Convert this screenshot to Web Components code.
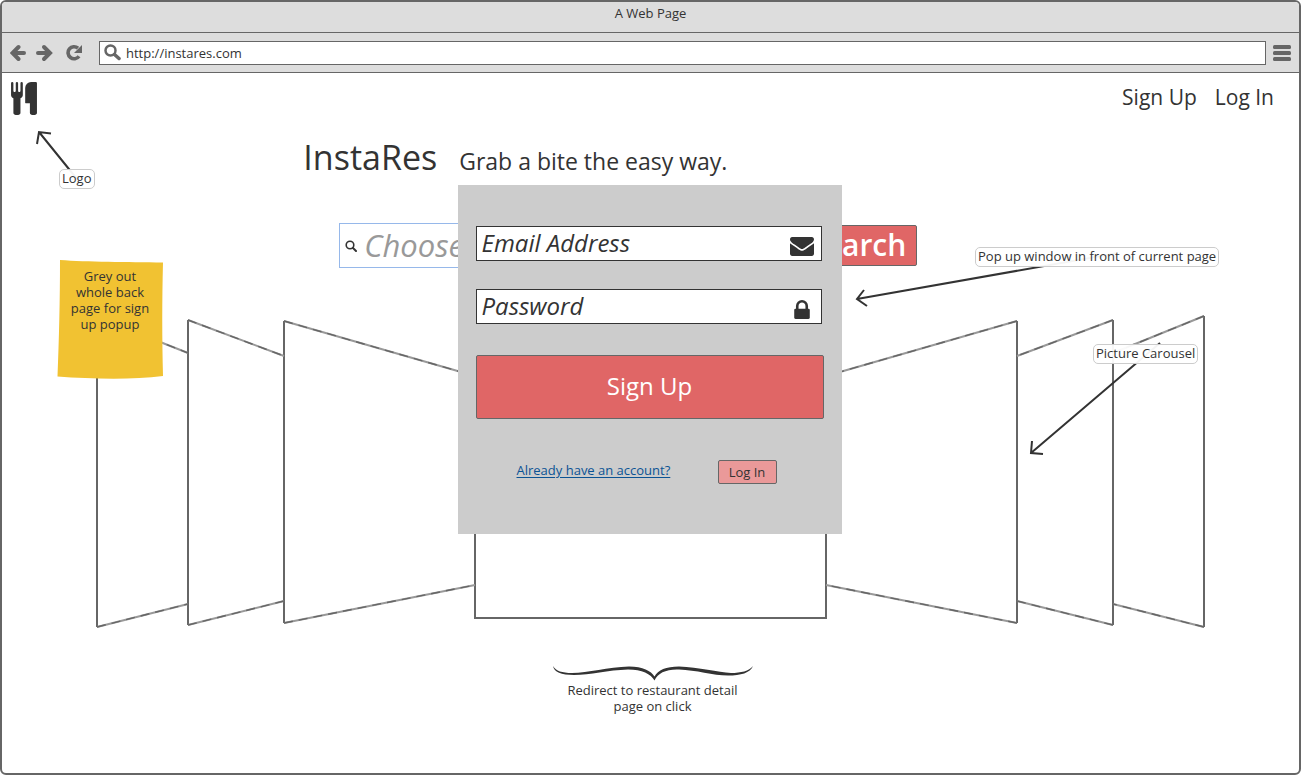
<!DOCTYPE html>
<html lang="en">
<head>
<meta charset="utf-8">
<title>InstaRes wireframe</title>
<style>
  body { margin: 0; font: 13px/16px "Open Sans", "Noto Sans", sans-serif; color: #333; background: #fff; }
</style>
</head>
<body>
<wire-browser heading="A Web Page" address="http://instares.com">
  <site-nav></site-nav>
  <page-stage>
    <site-hero></site-hero>
    <picture-carousel></picture-carousel>
    <brace-note>Redirect to restaurant detail page on click</brace-note>
    <signup-popup slot="popup"></signup-popup>
    <note-arrows slot="notes"></note-arrows>
    <sticky-note slot="notes">Grey out whole back page for sign up popup</sticky-note>
    <callout-note slot="notes" style="--x:7px;--y:48px">Logo</callout-note>
    <callout-note slot="notes" style="--x:923px;--y:126px">Pop up window in front of current page</callout-note>
    <callout-note slot="notes" style="--x:1041px;--y:223px">Picture Carousel</callout-note>
  </page-stage>
</wire-browser>

<script>
const define = (name, html, setup) => customElements.define(name, class extends HTMLElement {
  constructor() {
    super();
    const t = document.createElement('template');
    t.innerHTML = html;
    this.attachShadow({ mode: 'open' }).append(t.content.cloneNode(true));
  }
  connectedCallback() { if (setup) setup(this, this.shadowRoot); }
});

/* One-line text box with an icon at its right end */
define('icon-field', `
<style>
  :host { display: block; }
  label { display: flex; align-items: center; height: 35px; box-sizing: border-box; padding: 0 7px 0 5px; border: 1px solid #333; background: #fff; }
  input { flex: 1; min-width: 0; padding: 0 0 2px; border: 0; outline: 0; background: none; font: italic 24px/30px "Open Sans", sans-serif; color: #333; }
  input::placeholder { color: #333; opacity: 1; }
  slot { display: flex; justify-content: center; width: 24px; padding-top: 6px; }
</style>
<label><input><slot></slot></label>`, (host, root) => {
  const input = root.querySelector('input');
  input.type = host.getAttribute('type');
  input.placeholder = host.getAttribute('label');
  input.setAttribute('aria-label', host.getAttribute('label'));
});

define('wire-button', `
<style>
  :host { display: block; font-size: 13px; }
  button { display: block; width: 100%; height: 100%; margin: 0; padding: 0 9px 2px; border: 1px solid #666; border-radius: 2px; background: var(--fill, #e06666); color: inherit; font: inherit; line-height: 22px; }
</style>
<button type="button"><slot></slot></button>`);

define('wire-browser', `
<style>
  :host { display: flex; flex-direction: column; min-height: 100vh; box-sizing: border-box; border: 2px solid #666; border-radius: 6px; background: #fff; overflow: hidden; }
  .title { height: 30px; border-bottom: 1px solid #666; background: #ddd; text-align: center; line-height: 23px; }
  .bar { display: flex; align-items: center; height: 39px; padding: 0 8px; border-bottom: 1px solid #666; background: #ddd; }
  button { display: block; margin: 0; padding: 0; border: 0; background: none; line-height: 0; }
  .back { margin-right: 8px; }
  .next { margin-right: 12px; }
  .load { margin-right: 15px; }
  label { display: flex; flex: 1; align-items: center; height: 24px; box-sizing: border-box; margin-right: 7px; padding: 0 4px; border: 1px solid #666; background: #fff; }
  input { flex: 1; min-width: 0; margin-left: 5px; padding: 0; border: 0; outline: 0; background: none; font: inherit; color: inherit; }
</style>
<div class="title"></div>
<div class="bar">
  <button class="back" aria-label="Back"><svg width="18" height="18" viewBox="0 0 18 18" fill="none" stroke="#666" stroke-width="4"><path d="M8.500 3 2.500 9l6 6M3 9h11" stroke-linecap="round"/></svg></button>
  <button class="next" aria-label="Forward"><svg width="18" height="18" viewBox="0 0 18 18" fill="none" stroke="#666" stroke-width="4"><path d="M8 3 14 9l-6 6M13.500 9H2" stroke-linecap="round"/></svg></button>
  <button class="load" aria-label="Reload"><svg width="18" height="18" viewBox="0 0 18 18"><path d="M12 4.200A6 6 0 1 0 13 12.200" fill="none" stroke="#666" stroke-width="3.600"/><path d="M16 1v8H8z" fill="#666"/></svg></button>
  <label><svg width="17" height="17" viewBox="0 0 17 17" fill="none" stroke="#666"><circle cx="6.500" cy="6.500" r="5" stroke-width="2.500"/><path d="M10.500 10.500l4.500 4" stroke-width="3.500" stroke-linecap="round"/></svg><input type="text" aria-label="Address"></label>
  <button aria-label="Menu"><svg width="18" height="18" viewBox="0 0 18 18" fill="#666"><rect y="1" width="18" height="4" rx="1.500"/><rect y="7" width="18" height="4" rx="1.500"/><rect y="13" width="18" height="4" rx="1.500"/></svg></button>
</div>
<slot></slot>`, (host, root) => {
  root.querySelector('.title').textContent = host.getAttribute('heading');
  root.querySelector('input').value = host.getAttribute('address');
});

define('site-nav', `
<style>
  :host { display: flex; justify-content: space-between; align-items: center; height: 48px; padding: 0 25px 0 9px; }
  nav { display: flex; gap: 18px; font-size: 21px; line-height: 24px; }
  a { color: inherit; text-decoration: none; }
  svg { display: block; margin-top: 3px; }
</style>
<a href="#" aria-label="InstaRes home"><svg width="26" height="33" viewBox="0 64 1408 1792" fill="#333"><path d="M640 128v640q0 61-35.500 111t-92.500 70v779q0 52-38 90t-90 38h-128q-52 0-90-38t-38-90v-779q-57-20-92.500-70t-35.500-111v-640q0-26 19-45t45-19 45 19 19 45v416q0 26 19 45t45 19 45-19 19-45v-416q0-26 19-45t45-19 45 19 19 45v416q0 26 19 45t45 19 45-19 19-45v-416q0-26 19-45t45-19 45 19 19 45zm768 0v1600q0 52-38 90t-90 38h-128q-52 0-90-38t-38-90v-512h-224q-13 0-22.500-9.500t-9.500-22.500v-800q0-132 94-226t226-94h256q26 0 45 19t19 45z"/></svg></a>
<nav><a href="#signup">Sign Up</a><a href="#login">Log In</a></nav>`);

/* Centred page body; the popup and the reviewer notes lie over it */
define('page-stage', `
<style>
  :host { display: block; position: relative; width: 100%; max-width: 1197px; margin: 0 auto; }
</style>
<slot></slot><slot name="popup"></slot><slot name="notes"></slot>`);

define('site-hero', `
<style>
  :host { display: block; padding: 16px 0 44px; }
  header { display: flex; align-items: baseline; gap: 22px; padding-left: 21%; }
  h1 { margin: 0; font-size: 34px; line-height: 40px; font-weight: 400; }
  p { margin: 0; font-size: 23px; line-height: 32px; }
  form { display: flex; align-items: center; width: 578px; margin: 46px 0 0 24%; }
  label { display: flex; flex: 1; align-items: center; gap: 7px; height: 45px; box-sizing: border-box; padding: 0 5px; border: 1px solid #96b8ea; background: #fff; }
  input { flex: 1; min-width: 0; padding: 0 0 2px; border: 0; outline: 0; background: none; font: italic 31px/40px "Open Sans", sans-serif; }
  input::placeholder { color: #999; opacity: 1; }
  wire-button { width: 120px; height: 41px; color: #fff; font-size: 30px; font-weight: 600; }
</style>
<header><h1>InstaRes</h1><p>Grab a bite the easy way.</p></header>
<form>
  <label><svg width="12" height="12" viewBox="0 0 12 12" fill="none" stroke="#333"><circle cx="5" cy="5" r="3.800" stroke-width="1.600"/><path d="M8 8l3 3" stroke-width="2" stroke-linecap="round"/></svg><input type="search" placeholder="Choose" aria-label="Choose"></label>
  <wire-button>Search</wire-button>
</form>`);

define('picture-carousel', `
<style>
  :host, svg { display: block; }
  svg { width: 100%; height: auto; }
</style>
<svg viewBox="52 312 1197 320" fill="none" stroke="#666" stroke-width="2" role="img" aria-label="Picture carousel">
  <path d="M97 318V627M188 320V625M284 321V623M1017 321V623M1113 320V625M1204 316V627M475 340V618H826V340"/>
  <g stroke-width="2" stroke="#999">
    <path d="M97 317L188 353M188 320L284 356M284 321L475 376M1017 321L826 376M1113 320L1017 356M1204 316L1113 353"/>
    <path d="M97 627L188 604M188 625L284 601M284 623L475 585M1017 623L826 585M1113 625L1017 601M1204 627L1113 604"/>
  </g>
  <g stroke-width="1.400" stroke="#666" stroke-dasharray="9 6">
    <path d="M97 317L188 353M188 320L284 356M284 321L475 376M1017 321L826 376M1113 320L1017 356M1204 316L1113 353"/>
    <path d="M97 627L188 604M188 625L284 601M284 623L475 585M1017 623L826 585M1113 625L1017 601M1204 627L1113 604"/>
  </g>
</svg>`);

define('brace-note', `
<style>
  :host { display: flex; flex-direction: column; align-items: center; padding: 34px 0 32px 4px; text-align: center; }
  div { width: 200px; }
  svg { display: block; }
</style>
<svg width="200" height="16" viewBox="0 0 200 16" fill="#333"><path d="M0 0C3 5 9 7 19 7C35 7 55 1 76 .5C90 .5 98 5 101.500 10.500C105 4 113 .5 126 .5C146 1 165 6.500 178 7C188 7 196 5 200 0C197 7 188 9.500 175 9.500C160 9.500 143 4 126 3.500C113 3 105 7 101.500 14.500C98 8 89 3.500 75 3.500C55 4 37 9 21 9C8 9 1 6 0 0z"/></svg>
<div><slot></slot></div>`);

define('signup-popup', `
<style>
  :host { display: block; position: absolute; top: 64px; left: calc(50% - 193px); width: 384px; box-sizing: border-box; padding: 41px 18px 50px; background: #ccc; }
  form { display: flex; flex-direction: column; gap: 28px; }
  icon-field { margin-right: 2px; }
  svg { display: block; }
  .go { height: 64px; margin-top: 3px; color: #fff; font-size: 24px; font-weight: 500; }
  .foot { display: flex; justify-content: space-between; align-items: center; margin-top: 13px; padding: 0 47px 0 41px; }
  .foot a { margin-top: -5px; color: #0b5394; text-underline-offset: 2px; }
  .foot wire-button { --fill: #ea9999; height: 24px; width: 59px; }
</style>
<form>
  <icon-field type="email" label="Email Address"><svg width="24" height="19" viewBox="0 256 1792 1408" fill="#333"><path d="M1792 710v794q0 66-47 113t-113 47h-1472q-66 0-113-47t-47-113v-794q44 49 101 87 362 246 497 345 57 42 92.500 65.500t94.500 48 110 24.500h2q51 0 110-24.500t94.500-48 92.500-65.500q170-123 498-345 57-39 100-87zm0-294q0 79-49 151t-122 123q-376 261-468 325-10 7-42.500 31t-54 38.500-52 32.500-57.500 27-50 9h-2q-23 0-50-9t-57.500-27-52-32.500-54-38.500-42.500-31q-91-64-262-182.500t-205-142.500q-62-42-117-115.500t-55-136.500q0-78 41.500-130t118.500-52h1472q65 0 112.500 47t47.500 113z"/></svg></icon-field>
  <icon-field type="password" label="Password"><svg width="16" height="19" viewBox="0 128 1152 1408" fill="#333"><path d="M320 768h512v-192q0-106-75-181t-181-75-181 75-75 181v192zm832 96v576q0 40-28 68t-68 28h-960q-40 0-68-28t-28-68v-576q0-40 28-68t68-28h32v-192q0-184 132-316t316-132 316 132 132 316v192h32q40 0 68 28t28 68z"/></svg></icon-field>
  <wire-button class="go">Sign Up</wire-button>
  <div class="foot"><a href="#login">Already have an account?</a><wire-button>Log In</wire-button></div>
</form>`);

define('note-arrows', `
<style>
  :host { position: absolute; left: 0; top: 0; width: 1197px; pointer-events: none; }
  svg { display: block; overflow: visible; }
</style>
<svg width="1197" height="380" viewBox="52 121 1197 380" fill="none" stroke="#333" stroke-width="2">
  <path d="M77 179L39 132M51 133.500L39 132L37 144"/>
  <path d="M1118 253L857 299M864 290L857 299L867 306"/>
  <path d="M1160 343L1031 453M1032 441L1031 453L1043 454"/>
</svg>`);

define('callout-note', `
<style>
  :host { position: absolute; left: var(--x); top: var(--y); box-sizing: border-box; height: 20px; padding: 0 2px; border: 1px solid #ccc; border-radius: 5px; background: rgba(255, 255, 255, .95); line-height: 17px; white-space: nowrap; }
</style>
<slot></slot>`);

define('sticky-note', `
<style>
  :host { position: absolute; left: 5px; top: 139px; width: 106px; height: 119px; box-sizing: border-box; padding: 8px 10px; text-align: center; }
  svg { position: absolute; left: 0; top: 0; }
  span { position: relative; }
</style>
<svg width="106" height="119" viewBox="0 0 106 119"><path d="M3 0C30 2 70 2 106 2.500C105 40 105 80 106 116C75 120 35 119 .5 116.500C2 80 3 40 3 0z" fill="#f1c232"/></svg>
<span><slot></slot></span>`);
</script>
</body>
</html>
